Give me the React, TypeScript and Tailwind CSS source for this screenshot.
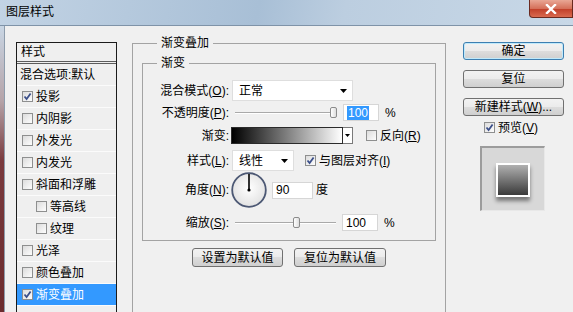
import React from "react";

const styleItems = [
  { label: "投影", checked: true },
  { label: "内阴影" },
  { label: "外发光" },
  { label: "内发光" },
  { label: "斜面和浮雕" },
  { label: "等高线", indent: true },
  { label: "纹理", indent: true },
  { label: "光泽" },
  { label: "颜色叠加" },
  { label: "渐变叠加", checked: true, active: true },
];

function CheckBox({ checked = false }: { checked?: boolean }) {
  return (
    <span className="flex h-[11px] w-[11px] shrink-0 items-center justify-center border border-[#8e8f8f] bg-[linear-gradient(135deg,#dcdcdc,#fdfdfd)]">
      {checked && (
        <svg width="9" height="9" viewBox="0 0 9 9">
          <path d="M1.5 4.5 L3.6 7 L7.6 1.5" fill="none" stroke="#3b4f8a" strokeWidth="1.8" />
        </svg>
      )}
    </span>
  );
}

function Arrow() {
  return (
    <svg width="7" height="4" viewBox="0 0 7 4">
      <polygon points="0,0 7,0 3.5,4" fill="#000" />
    </svg>
  );
}

function WinButton({ children, primary = false, className = "" }: { children: React.ReactNode; primary?: boolean; className?: string }) {
  return (
    <div
      className={`flex h-[18px] items-center justify-center rounded-[3px] border bg-[linear-gradient(#f2f2f2_0%,#ebebeb_50%,#dddddd_50%,#cfcfcf_100%)] ${
        primary ? "border-[#3c7fb1] shadow-[inset_0_0_0_1px_#bfe9fb]" : "border-[#707070]"
      } ${className}`}
    >
      {children}
    </div>
  );
}

function Slider({ before, after }: { before: number; after: number }) {
  return (
    <div className="flex items-center">
      <div className="h-[2px] border-t border-b border-t-[#a9a9a9] border-b-white" style={{ width: before }} />
      <div className="h-[11px] w-[7px] rounded-[2px] border border-[#8b8b8b] bg-[linear-gradient(90deg,#ffffff,#dedede)]" />
      <div className="h-[2px] border-t border-b border-t-[#a9a9a9] border-b-white" style={{ width: after }} />
    </div>
  );
}

function NumBox({ children, className = "" }: { children: React.ReactNode; className?: string }) {
  return (
    <div className={`flex h-[17px] items-center border border-[#d6d6d6] bg-white pl-[3px] ${className}`}>
      {children}
    </div>
  );
}

export default function App() {
  return (
    <div className="h-[312px] w-[573px] overflow-hidden bg-[#f0f0f0] font-['Liberation_Sans','Noto_Sans_CJK_SC',sans-serif] text-[12px] leading-[14px] text-black">
      {/* title bar */}
      <div className="flex h-[26px] items-start justify-between border-b border-[#7f93a8] bg-[linear-gradient(100deg,#c2d3e4_0%,#a8bfd6_45%,#bccee0_60%,#c8d8e7_100%)]">
        <span className="ml-[6px] mt-[5px]">图层样式</span>
        <div className="flex h-[18px] w-[44px] items-center justify-center rounded-bl-[4px] border border-t-0 border-[#6a2a20] bg-[linear-gradient(#e9a795_0%,#d5705a_50%,#c2412b_55%,#d96a4f_100%)]">
          <svg width="12" height="10" viewBox="0 0 12 10">
            <path d="M2 1 L10 9 M10 1 L2 9" stroke="#fff" strokeWidth="2.4" strokeLinecap="square" />
          </svg>
        </div>
      </div>

      <div className="flex h-[300px]">
        <div className="w-[5px] border-r border-[#8d9cac] bg-[linear-gradient(#c9d6e4_0%,#b5a3a8_25%,#7a3a3e_45%,#6a2a2c_100%)]" />

        {/* style list */}
        <div className="ml-[11px] mt-[16px] h-[290px] w-[101px] border border-b-0 border-[#1b1b1b] bg-[#efefef]">
          <div className="flex h-[21px] items-center border-b-[3px] border-double border-[#5c5c5c] pl-[4px]">样式</div>
          <div className="flex h-[22px] items-center border-b border-[#fbfbfb] pl-[3px]">混合选项:默认</div>
          {styleItems.map((item) => (
            <div
              key={item.label}
              className={`flex h-[22px] items-center border-b border-[#fbfbfb] ${item.indent ? "pl-[19px]" : "pl-[5px]"} ${
                item.active ? "bg-[#3399ff] text-white" : ""
              }`}
            >
              <CheckBox checked={item.checked} />
              <span className="ml-[3px]">{item.label}</span>
            </div>
          ))}
        </div>

        {/* gradient overlay group */}
        <fieldset className="ml-[15px] mt-[10px] h-[300px] w-[314px] border border-[#a3a3a3] px-[9px] pt-[6px]">
          <legend className="ml-[15px] px-[4px]">渐变叠加</legend>
          <fieldset className="border border-[#a3a3a3] pb-[9px] pt-[10px]">
            <legend className="ml-[14px] px-[4px]">渐变</legend>

            <div className="flex h-[21px] items-center">
              <span className="w-[86px] text-right">混合模式(<u>O</u>):</span>
              <div className="ml-[3px] flex h-[21px] w-[121px] items-center justify-between border border-[#dedede] bg-white pl-[6px] pr-[5px]">
                <span>正常</span>
                <Arrow />
              </div>
            </div>

            <div className="mt-[3px] flex h-[17px] items-center">
              <span className="w-[86px] text-right">不透明度(<u>P</u>):</span>
              <div className="ml-[6px]">
                <Slider before={95} after={0} />
              </div>
              <NumBox className="ml-[6px] w-[36px]">
                <span className="bg-[#3399ff] px-[1px] text-white">100</span>
              </NumBox>
              <span className="ml-[6px]">%</span>
            </div>

            <div className="mt-[6px] flex h-[17px] items-center">
              <span className="w-[86px] text-right">渐变:</span>
              <div className="ml-[2px] h-[17px] w-[112px] border border-[#2b2b2b] bg-[linear-gradient(90deg,#000,#fff)]" />
              <div className="flex h-[17px] w-[10px] items-center justify-center border border-l-0 border-[#7a7a7a] bg-white">
                <svg width="5" height="3" viewBox="0 0 5 3">
                  <polygon points="0,0 5,0 2.5,3" fill="#000" />
                </svg>
              </div>
              <span className="ml-[13px]">
                <CheckBox />
              </span>
              <span className="ml-[3px]">反向(<u>R</u>)</span>
            </div>

            <div className="mt-[6px] flex h-[21px] items-center">
              <span className="w-[86px] text-right">样式(<u>L</u>):</span>
              <div className="ml-[3px] flex h-[21px] w-[62px] items-center justify-between border border-[#dedede] bg-white pl-[6px] pr-[5px]">
                <span>线性</span>
                <Arrow />
              </div>
              <span className="ml-[11px]">
                <CheckBox checked />
              </span>
              <span className="ml-[3px]">与图层对齐(<u>I</u>)</span>
            </div>

            <div className="mt-[1px] flex h-[36px] items-center">
              <span className="w-[86px] text-right">角度(<u>N</u>):</span>
              <svg className="ml-[2px]" width="36" height="36" viewBox="0 0 36 36">
                <defs>
                  <radialGradient id="dial" cx="50%" cy="45%" r="55%">
                    <stop offset="0%" stopColor="#ffffff" />
                    <stop offset="100%" stopColor="#e2e2e2" />
                  </radialGradient>
                </defs>
                <circle cx="18" cy="18" r="16.8" fill="url(#dial)" stroke="#4c5874" strokeWidth="1.8" />
                <line x1="18" y1="18" x2="18" y2="2" stroke="#000" strokeWidth="1.6" />
                <circle cx="18" cy="18" r="1.6" fill="#000" />
              </svg>
              <NumBox className="ml-[5px] w-[41px]">90</NumBox>
              <span className="ml-[3px]">度</span>
            </div>

            <div className="mt-[6px] flex h-[17px] items-center">
              <span className="w-[86px] text-right">缩放(<u>S</u>):</span>
              <div className="ml-[6px]">
                <Slider before={58} after={36} />
              </div>
              <NumBox className="ml-[6px] w-[36px]">100</NumBox>
              <span className="ml-[6px]">%</span>
            </div>
          </fieldset>

          <div className="mt-[7px] flex justify-center gap-[11px]">
            <WinButton className="h-[19px] w-[91px]">设置为默认值</WinButton>
            <WinButton className="h-[19px] w-[92px]">复位为默认值</WinButton>
          </div>
        </fieldset>

        {/* right column */}
        <div className="ml-[17px] mt-[16px] flex w-[101px] flex-col">
          <WinButton primary>确定</WinButton>
          <WinButton className="mt-[10px]">复位</WinButton>
          <WinButton className="mt-[10px]">
            新建样式(<u>W</u>)...
          </WinButton>
          <div className="ml-[21px] mt-[6px] flex h-[11px] items-center">
            <CheckBox checked />
            <span className="ml-[3px]">预览(<u>V</u>)</span>
          </div>
          <div className="ml-[17px] mt-[13px] flex h-[65px] w-[65px] justify-center border-l-2 border-t-2 border-b border-r border-l-[#9c9c9c] border-t-[#9c9c9c] border-b-[#e8e8e8] border-r-[#e8e8e8] bg-[#d8d8d8] pt-[15px]">
            <div className="h-[34px] w-[34px] border-2 border-white bg-[linear-gradient(#b0b0b0,#3a3a3a)] shadow-[0_4px_4px_rgba(0,0,0,0.45)]" />
          </div>
        </div>
      </div>
    </div>
  );
}
